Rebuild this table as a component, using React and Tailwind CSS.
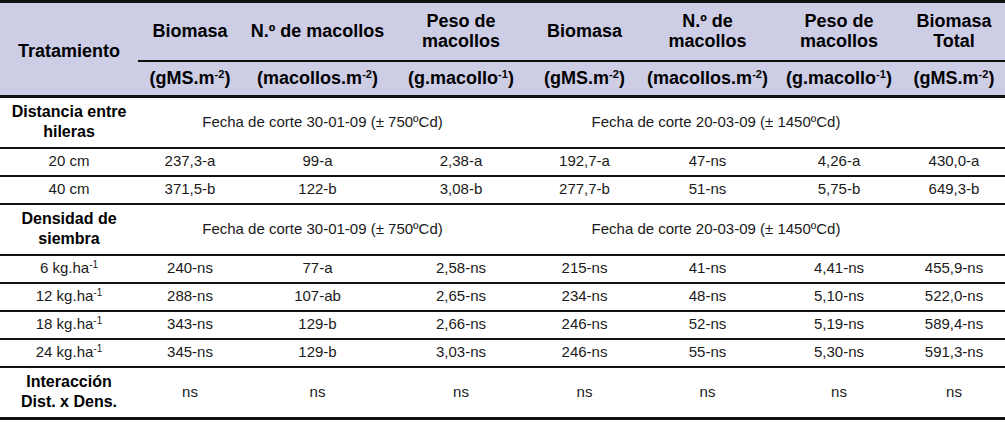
import React from 'react';

const cols = [138, 104, 151, 136, 111, 135, 128, 102];

const U = ({ base, exp }) => (
  <span>
    ({base}
    <sup className="text-[11px]">{exp}</sup>)
  </span>
);

const rows1 = [
  ['20 cm', '237,3-a', '99-a', '2,38-a', '192,7-a', '47-ns', '4,26-a', '430,0-a'],
  ['40 cm', '371,5-b', '122-b', '3,08-b', '277,7-b', '51-ns', '5,75-b', '649,3-b'],
];

const rows2 = [
  ['6', '240-ns', '77-a', '2,58-ns', '215-ns', '41-ns', '4,41-ns', '455,9-ns'],
  ['12', '288-ns', '107-ab', '2,65-ns', '234-ns', '48-ns', '5,10-ns', '522,0-ns'],
  ['18', '343-ns', '129-b', '2,66-ns', '246-ns', '52-ns', '5,19-ns', '589,4-ns'],
  ['24', '345-ns', '129-b', '3,03-ns', '246-ns', '55-ns', '5,30-ns', '591,3-ns'],
];

function SectionRow({ label }) {
  return (
    <tr className="h-[51px] border-b-2 border-[#111]">
      <td className="font-bold text-black text-[16px] leading-[20px]">{label}</td>
      <td colSpan={3} className="pr-[22px]">Fecha de corte 30-01-09 (± 750ºCd)</td>
      <td colSpan={3}>Fecha de corte 20-03-09 (± 1450ºCd)</td>
      <td></td>
    </tr>
  );
}

export default function App() {
  return (
    <div className="w-[1005px] h-[433px] bg-white font-['Liberation_Sans',Arial,sans-serif]">
      <table className="w-[1005px] border-collapse table-fixed text-center text-[15px] text-[#1a1a1a]">
        <colgroup>
          {cols.map((w, i) => (
            <col key={i} style={{ width: w }} />
          ))}
        </colgroup>
        <thead className="bg-[#cdcde6] text-black font-bold text-[18px]">
          <tr className="h-[59px] border-t-[3px] border-[#111]">
            <th rowSpan={2} className="font-bold pt-[4px]">Tratamiento</th>
            <th className="border-b-2 border-[#111] font-bold">Biomasa</th>
            <th className="border-b-2 border-[#111] font-bold">N.º de macollos</th>
            <th className="border-b-2 border-[#111] font-bold leading-[20px]">Peso de<br />macollos</th>
            <th className="border-b-2 border-[#111] font-bold">Biomasa</th>
            <th className="border-b-2 border-[#111] font-bold leading-[20px]">N.º de<br />macollos</th>
            <th className="border-b-2 border-[#111] font-bold leading-[20px]">Peso de<br />macollos</th>
            <th className="border-b-2 border-[#111] font-bold leading-[20px]">Biomasa<br />Total</th>
          </tr>
          <tr className="h-[36px] border-b-[3px] border-[#111]">
            <th className="font-bold"><U base="gMS.m" exp="-2" /></th>
            <th className="font-bold"><U base="macollos.m" exp="-2" /></th>
            <th className="font-bold"><U base="g.macollo" exp="-1" /></th>
            <th className="font-bold"><U base="gMS.m" exp="-2" /></th>
            <th className="font-bold"><U base="macollos.m" exp="-2" /></th>
            <th className="font-bold"><U base="g.macollo" exp="-1" /></th>
            <th className="font-bold"><U base="gMS.m" exp="-2" /></th>
          </tr>
        </thead>
        <tbody>
          <SectionRow label={<>Distancia entre<br />hileras</>} />
          {rows1.map((r) => (
            <tr key={r[0]} className="h-[28px] border-b-2 border-[#111]">
              {r.map((c, i) => (
                <td key={i}>{c}</td>
              ))}
            </tr>
          ))}
          <SectionRow label={<>Densidad de<br />siembra</>} />
          {rows2.map((r) => (
            <tr key={r[0]} className="h-[28px] border-b-2 border-[#111]">
              <td>
                {r[0]} kg.ha<sup className="text-[10px]">-1</sup>
              </td>
              {r.slice(1).map((c, i) => (
                <td key={i}>{c}</td>
              ))}
            </tr>
          ))}
          <tr className="h-[52px] border-b-[3px] border-[#111]">
            <td className="font-bold text-black text-[16px] leading-[20px]">
              Interacción<br />Dist. x Dens.
            </td>
            {Array.from({ length: 7 }).map((_, i) => (
              <td key={i}>ns</td>
            ))}
          </tr>
        </tbody>
      </table>
    </div>
  );
}
